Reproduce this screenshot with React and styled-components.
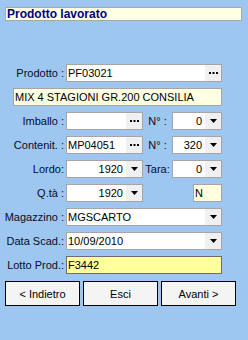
import React from 'react';
import styled, { createGlobalStyle } from 'styled-components';

const GlobalStyle = createGlobalStyle`
  html, body {
    margin: 0;
    padding: 0;
    background: #9dc7f1;
  }
  body {
    font-family: "Liberation Sans", Arial, sans-serif;
    font-size: 11px;
    color: #000;
  }
`;

const Arrow = () => (
  <svg width="7" height="4" viewBox="0 0 7 4">
    <path d="M0 0h7L3.5 4z" fill="#000" />
  </svg>
);

const Dots = () => (
  <svg width="9" height="2" viewBox="0 0 9 2">
    <rect x="0" y="0" width="2" height="2" fill="#000" />
    <rect x="3.5" y="0" width="2" height="2" fill="#000" />
    <rect x="7" y="0" width="2" height="2" fill="#000" />
  </svg>
);

const Field = ({ value, width, align, button, bg }) => (
  <Box $width={width} $bg={bg}>
    <Value $align={align}>{value}</Value>
    {button === 'dots' && <Side><Dots /></Side>}
    {button === 'arrow' && <Side><Arrow /></Side>}
  </Box>
);

const App = () => (
  <>
    <GlobalStyle />
    <Page>
      <Title>Prodotto lavorato</Title>
      <Form>
        <Row>
          <Label>Prodotto :</Label>
          <Field value="PF03021" width={156} button="dots" />
        </Row>
        <Desc>MIX 4 STAGIONI GR.200 CONSILIA</Desc>
        <Row>
          <Label>Imballo :</Label>
          <Field value="" width={77} button="dots" />
          <SubLabel>N° :</SubLabel>
          <Field value="0" width={50} align="right" button="arrow" />
        </Row>
        <Row>
          <Label>Contenit. :</Label>
          <Field value="MP04051" width={77} button="dots" />
          <SubLabel>N° :</SubLabel>
          <Field value="320" width={50} align="right" button="arrow" />
        </Row>
        <Row>
          <Label>Lordo:</Label>
          <Field value="1920" width={77} align="right" button="arrow" />
          <SubLabel>Tara:</SubLabel>
          <Field value="0" width={50} align="right" button="arrow" />
        </Row>
        <Row>
          <Label>Q.tà :</Label>
          <Field value="1920" width={77} align="right" button="arrow" />
          <Spacer />
          <Field value="N" width={29} bg="#ffffe0" />
        </Row>
        <Row>
          <Label>Magazzino :</Label>
          <Field value="MGSCARTO" width={156} button="arrow" />
        </Row>
        <Row>
          <Label>Data Scad.:</Label>
          <Field value="10/09/2010" width={156} button="arrow" />
        </Row>
        <Row>
          <Label>Lotto Prod.:</Label>
          <Lotto>F3442</Lotto>
        </Row>
      </Form>
      <Buttons>
        <Button>&lt; Indietro</Button>
        <Button>Esci</Button>
        <Button>Avanti &gt;</Button>
      </Buttons>
    </Page>
  </>
);

export default App;

const Page = styled.div`
  width: 248px;
  height: 340px;
  box-sizing: border-box;
  padding-top: 7px;
  display: flex;
  flex-direction: column;
`;

const Title = styled.div`
  margin: 0 6px 0 5px;
  height: 14px;
  box-sizing: border-box;
  border: 1px solid #a8a8a8;
  background: #ffffe4;
  color: #000080;
  font-weight: bold;
  font-size: 12px;
  line-height: 12px;
  padding-left: 1px;
`;

const Form = styled.div`
  margin-top: 43px;
  display: flex;
  flex-direction: column;
  gap: 6px;
`;

const Row = styled.div`
  display: flex;
  align-items: center;
  height: 18px;
`;

const Label = styled.div`
  width: 64px;
  padding-right: 2px;
  text-align: right;
  white-space: nowrap;
  color: #0a0a28;
`;

const SubLabel = styled.div`
  width: 29px;
  text-align: center;
  white-space: nowrap;
  color: #0a0a28;
`;

const Spacer = styled.div`
  width: 50px;
`;

const Box = styled.div`
  width: ${p => p.$width}px;
  height: 18px;
  box-sizing: border-box;
  border: 1px solid #a5a5a5;
  background: ${p => p.$bg || '#fff'};
  display: flex;
  align-items: stretch;
`;

const Value = styled.div`
  flex: 1;
  padding: 0 3px 0 1px;
  line-height: 16px;
  text-align: ${p => p.$align || 'left'};
`;

const Side = styled.div`
  width: 16px;
  background: #f0f0f0;
  display: flex;
  align-items: center;
  justify-content: center;
`;

const Desc = styled.div`
  margin-left: 13px;
  width: 209px;
  height: 18px;
  box-sizing: border-box;
  border: 1px solid #a5a5a5;
  background: #ffffe4;
  padding-left: 1px;
  line-height: 16px;
`;

const Lotto = styled.div`
  width: 156px;
  height: 18px;
  box-sizing: border-box;
  border: 1px solid #6d6d6d;
  background: #ffff9c;
  padding-left: 1px;
  line-height: 16px;
`;

const Buttons = styled.div`
  margin: 7px 0 0 5px;
  display: flex;
  gap: 3px;
`;

const Button = styled.div`
  width: 75px;
  height: 25px;
  box-sizing: border-box;
  border: 1px solid #000;
  background: #f4f4f4;
  display: flex;
  align-items: center;
  justify-content: center;
`;
